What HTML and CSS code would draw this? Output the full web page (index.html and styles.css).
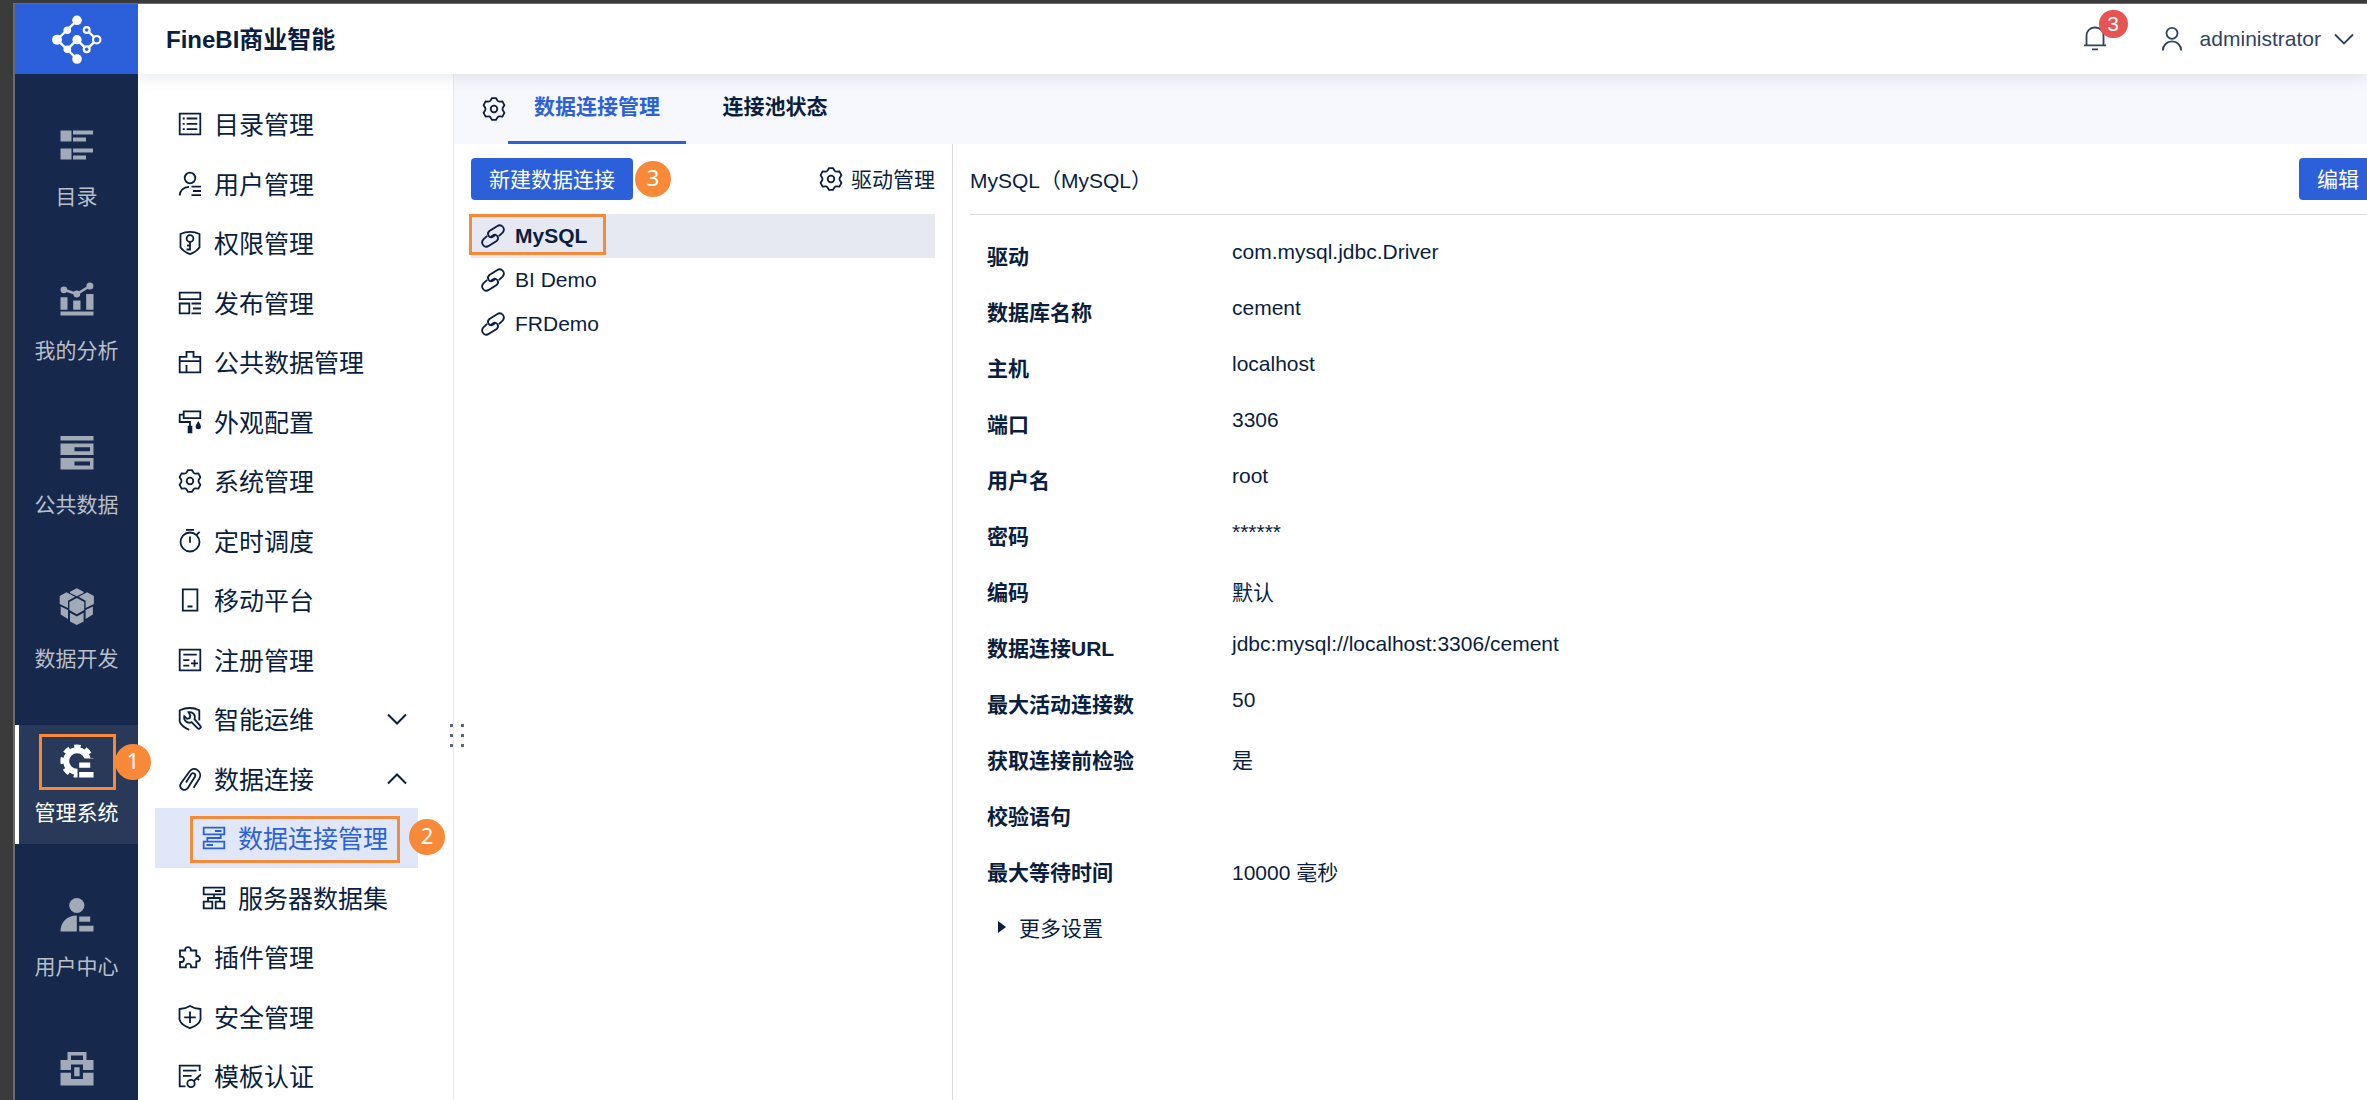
FILE: index.html
```html
<!DOCTYPE html>
<html lang="zh-CN">
<head>
<meta charset="utf-8">
<title>FineBI商业智能</title>
<link rel="stylesheet" href="styles.css">
</head>
<body>
<svg class="sprite" aria-hidden="true">
  <symbol id="gear" viewBox="0 0 24 24" overflow="visible"><path d="M10 1.2h4l1.6 2.6q.7.9 1.9.8l2.9-.2 2 3.8-1.6 2.5q-.6 1.3 0 2.6l1.6 2.5-2 3.8-2.9-.2q-1.2-.1-1.9.8L14 22.8h-4l-1.6-2.6q-.7-.9-1.9-.8l-2.9.2-2-3.8 1.6-2.5q.6-1.3 0-2.6L1.6 8.2l2-3.8 2.9.2q1.2.1 1.9-.8Z"/><circle cx="12" cy="12" r="3.3"/></symbol>
  <symbol id="link" viewBox="0 0 24 24" overflow="visible"><path d="M17.8 12.2 21.6 8.6C25 4.5 20.5-.8 16 2.2L8.4 7C5 10 8.500 15 11.800 12.800L14.500 11"/><path d="M6.2 11.8 2.4 15.4C-1 19.5 3.5 24.8 8 21.8L15.6 17C19 14 15.5 9 12.2 11.2L9.500 13"/></symbol>
  <symbol id="chevron-down" viewBox="0 0 24 24"><path d="m3 7.500 9 9 9-9"/></symbol>
  <symbol id="chevron-up" viewBox="0 0 24 24"><path d="m3 16.500 9-9 9 9"/></symbol>
</svg>
<div class="app">
  <aside class="sidebar">
    <a class="logo" href="#" aria-label="FineBI">
      <svg viewBox="0 0 52 52" aria-hidden="true">
        <path d="M26 7.300 6 26.700 26 46M16.300 36.300 26 26.700l9.700 9.600M35.700 17l10 9.700-10 9.600" fill="none" stroke="#fff" stroke-width="2.400"/>
        <g fill="#fff"><circle cx="26" cy="7.300" r="4.800"/><circle cx="16.300" cy="17.300" r="3.800"/><circle cx="6" cy="26.700" r="5"/><circle cx="26" cy="26.700" r="4.600"/><circle cx="16.300" cy="36.300" r="3.800"/><circle cx="26" cy="46" r="4.800"/></g>
        <g fill="#2c60db" stroke="#fff" stroke-width="2.200"><circle cx="35.700" cy="17" r="2.900"/><circle cx="45.700" cy="26.700" r="3.700"/><circle cx="35.700" cy="36.300" r="2.900"/></g>
      </svg>
    </a>
    <nav class="rail">
      <a class="rail-item" href="#"><svg viewBox="0 0 34 34" aria-hidden="true"><path d="M.5 2.500h11v11H.5zM13 2.500h20v4H13zM13 9.500h13v4H13zM.5 20.500h11v11H.5zM13 20.500h20v4H13zM13 27.500h13v4H13z"/></svg><span>目录</span></a>
      <a class="rail-item" href="#"><svg viewBox="0 0 34 34" aria-hidden="true"><path d="M.5 15.200h7v12.500h-7zM13.200 18.500h7.300v9.200h-7.300zM26.200 12h7.300v15.700h-7.300zM.5 29.500h33v4H.5z"/><circle cx="3.900" cy="7.800" r="3.400"/><circle cx="16.800" cy="12" r="3.400"/><circle cx="29.900" cy="4" r="3.500"/><path d="m3.900 7.800 12.900 4.200L29.900 4" fill="none" stroke="currentColor" stroke-width="2.600"/></svg><span>我的分析</span></a>
      <a class="rail-item" href="#"><svg viewBox="0 0 34 34" aria-hidden="true"><path fill-rule="evenodd" d="M.5 0h33v4.500H.5zM.5 7.500h33v11.500H.5zM14.500 11.200v4H30v-4zM.5 22h33v11.500H.5zM14.500 25.500v4H30v-4z"/></svg><span>公共数据</span></a>
      <a class="rail-item" href="#"><svg viewBox="0 0 34 34" aria-hidden="true"><path d="m16.800 8 7.400 4v8l-7.400 4.200L9.400 20v-8zM16.800-1.700l6.700 3.400V3l-6.700 3.300L10 3V1.700zM-.3 6l6.800-3.700L15 6.700l-7 4V18l-8.300-4zM33.900 6l-6.800-3.700-8.500 4.400 7 4V18l8.300-4zM.7 16.500 8 20v9L.7 24.500zM32.900 16.500 25.600 20v9l7.300-4.500zM10 22.700l6.800 3.800 6.800-3.800v8.800L16.800 35 10 31.500z"/></svg><span>数据开发</span></a>
      <a class="rail-item is-active" href="#"><svg viewBox="0 0 34 34" aria-hidden="true"><clipPath id="gear-cut"><path d="M-1-1h36v15.500H17.500V35H-1z"/></clipPath><g clip-path="url(#gear-cut)" fill="none" stroke="currentColor"><circle cx="17" cy="17" r="10.800" stroke-width="6"/><circle cx="17" cy="17" r="14.800" stroke-width="3.600" stroke-dasharray="6.500 5.124" stroke-dashoffset="3.250"/></g><path d="M19.200 18.500h11v5.300h-11zM19.200 28h14.300v5.500H19.200z"/></svg><span>管理系统</span><i class="mark mark-rail"></i><b class="step step-rail">1</b></a>
      <a class="rail-item" href="#"><svg viewBox="0 0 34 34" aria-hidden="true"><circle cx="16.800" cy="7.500" r="7.600"/><path d="M.5 33.500c0-9.500 6.500-16 16.300-16v16zM19.200 18.500h11v5.300h-11zM19.200 27.700h14.300v5.800H19.200z"/></svg><span>用户中心</span></a>
      <a class="rail-item" href="#" aria-label="工具箱"><svg viewBox="0 0 34 34" aria-hidden="true"><path fill-rule="evenodd" d="M7.500 8V0h19v8h7v10H23v-5.500H11V18H.5V8zM11 8h12V3.500H11zM.5 20.800H11V27h12v-6.200h10.500v12.700H.5zM14.200 15.200h5.400v9h-5.400z"/></svg></a>
    </nav>
  </aside>

  <div class="main">
    <header class="topbar">
      <h1 class="brand">FineBI商业智能</h1>
      <button class="bell" type="button" aria-label="消息"><svg class="icon" viewBox="0 0 24 24" aria-hidden="true"><path d="M3.500 18V8.500a8 8 0 0 1 8-8h1a8 8 0 0 1 8 8V18M1 18.300h22M9 22.300h6"/></svg><span class="count">3</span></button>
      <button class="account" type="button"><svg class="icon" viewBox="0 0 24 24" aria-hidden="true"><circle cx="12" cy="6.300" r="5.500"/><path d="M2.800 23.500a9.200 9.200 0 0 1 18.400 0"/></svg><span>administrator</span><svg class="icon" aria-hidden="true"><use href="#chevron-down"/></svg></button>
    </header>

    <div class="workspace">
      <nav class="menu">
        <ul class="menu-list">
          <li><a class="menu-link" href="#"><svg class="icon" viewBox="0 0 24 24" aria-hidden="true"><path d="M1.700 1.700h20.600v20.600H1.700zM4.700 6.500h2M4.700 11.800h2M4.700 17.100h2M8.700 6.500h10.600M8.700 11.800h10.600M8.700 17.100h10.600"/></svg><span>目录管理</span></a></li>
          <li><a class="menu-link" href="#"><svg class="icon" viewBox="0 0 24 24" aria-hidden="true"><circle cx="12" cy="6" r="5.300"/><path d="M1.700 23.500C1.700 18.500 5.500 15 11 14.800M13.500 14.700H23M15 19h8M13.500 23.200H23"/></svg><span>用户管理</span></a></li>
          <li><a class="menu-link" href="#"><svg class="icon" viewBox="0 0 24 24" aria-hidden="true"><path d="M12 .8Q17 .8 21.500 3v13.500Q18 21 12 23.200 6 21 2.500 16.500V3Q7 .8 12 .8Z"/><circle cx="12" cy="7.500" r="3.400"/><path d="M12 11v8.500M12 14.500H9M12 18.500H8.500"/></svg><span>权限管理</span></a></li>
          <li><a class="menu-link" href="#"><svg class="icon" viewBox="0 0 24 24" aria-hidden="true"><path d="M1.700 1.700h20.600v6.500H1.700zM1.700 12.500h9.600v9.800H1.700zM13.500 12.500H23M15 17.500h8M13.500 22.300H23"/></svg><span>发布管理</span></a></li>
          <li><a class="menu-link" href="#"><svg class="icon" viewBox="0 0 24 24" aria-hidden="true"><path d="M1.700 6.800h6.800v-5h7v5h6.800v15.500H1.700zM1.700 11.200h20.600M8.500 15v7"/></svg><span>公共数据管理</span></a></li>
          <li><a class="menu-link" href="#"><svg class="icon" viewBox="0 0 24 24" aria-hidden="true"><path d="M5.700 1.300h16.600v6.900H5.700zM5.700 4.700h-4V12H12v4"/><path class="solid" d="M9.700 15.700h4.600v7.600H9.700zM20.300 11q5.400 8 0 8.300-5.400-.3 0-8.300z"/></svg><span>外观配置</span></a></li>
          <li><a class="menu-link" href="#"><svg class="icon" aria-hidden="true"><use href="#gear"/></svg><span>系统管理</span></a></li>
          <li><a class="menu-link" href="#"><svg class="icon" viewBox="0 0 24 24" aria-hidden="true"><circle cx="12" cy="13" r="9.500"/><path d="M8 .9h8M12 7.500v6.300M18.200 6.200l3.500-3.400"/></svg><span>定时调度</span></a></li>
          <li><a class="menu-link" href="#"><svg class="icon" viewBox="0 0 24 24" aria-hidden="true"><path d="M4.800 1.400h14.600v21.200H4.800zM9.500 18.500h5"/></svg><span>移动平台</span></a></li>
          <li><a class="menu-link" href="#"><svg class="icon" viewBox="0 0 24 24" aria-hidden="true"><path d="M1.700 1.700h20.600v20.600H1.700zM5.300 6.700h13.500M5.300 12.200h6M5.300 17.700h6M13 15.300h7M16.500 11.800v7"/></svg><span>注册管理</span></a></li>
          <li><a class="menu-link" href="#"><svg class="icon" viewBox="0 0 24 24" aria-hidden="true"><path d="M21.300 13.500V3.300Q12-1.300 1.700 3.300V14.500q1.500 5 9.500 8.300"/><path d="M10.500 5.200a5.200 5.200 0 0 1 6 7l5.600 6.400a1.800 1.800 0 0 1-2.600 2.600l-6-6a5.200 5.200 0 0 1-7.200-6l2.700 2.600 2.600-.6.7-2.700z"/></svg><span>智能运维</span><svg class="icon arrow" aria-hidden="true"><use href="#chevron-down"/></svg></a></li>
          <li>
            <a class="menu-link" href="#"><svg class="icon" viewBox="0 0 24 24" aria-hidden="true"><path d="m15.600 20.800 5.800-9.300C25 5 16-2 11.500 4.500L3 16.200c-3 5 4 9.300 7 4.600l6.900-11c1.500-3-2.200-5-3.900-2.400L8 15.400"/></svg><span>数据连接</span><svg class="icon arrow" aria-hidden="true"><use href="#chevron-up"/></svg></a>
            <ul class="menu-sub">
              <li><a class="menu-link is-active" href="#"><svg class="icon" viewBox="0 0 24 24" aria-hidden="true"><path d="M1.700 1.700h20.600v6.600H1.700zM13 5h6.500M18.700 8.300V12H5.300v3.700M1.700 15.700h20.600v6.600H1.700zM4.500 19H11"/></svg><span>数据连接管理</span><i class="mark mark-menu"></i><b class="step step-menu">2</b></a></li>
              <li><a class="menu-link" href="#"><svg class="icon" viewBox="0 0 24 24" aria-hidden="true"><path d="M1.700 1.700h20.600v6.600H1.700zM13 5h6.500M12 8.300V12M6 15.700V12h12v3.700M1.700 15.700h8.600v6.600H1.700zM13.700 15.700h8.600v6.600h-8.600z"/></svg><span>服务器数据集</span></a></li>
            </ul>
          </li>
          <li><a class="menu-link" href="#"><svg class="icon" viewBox="0 0 24 24" aria-hidden="true"><path d="M2 5.500h5.200V4.200a2.900 2.900 0 0 1 5.600 0v1.300h5.500V11h1a2.700 2.700 0 0 1 0 5.400h-1v5.900H13v-1.700a2.700 2.700 0 0 0-5.200 0v1.700H2V17h1.300a2.700 2.700 0 0 0 0-5.400H2Z"/></svg><span>插件管理</span></a></li>
          <li><a class="menu-link" href="#"><svg class="icon" viewBox="0 0 24 24" aria-hidden="true"><path d="M12 .9Q16 3.400 22.500 4v10.500Q21 20 12 23.200 3 20 1.500 14.500V4Q8 3.400 12 .9ZM12 6.500V18M6.200 12.300h11.600"/></svg><span>安全管理</span></a></li>
          <li><a class="menu-link" href="#"><svg class="icon" viewBox="0 0 24 24" aria-hidden="true"><path d="M7.500 22.300H1.700V1.700h20V7M5 6.700h13.500M5 11.800h8.500M15.800 17 23 10.500M19 14.200l2 2"/><circle cx="13" cy="19.500" r="3.700"/></svg><span>模板认证</span></a></li>
        </ul>
        <div class="grip"><i></i><i></i><i></i><i></i><i></i><i></i></div>
      </nav>

      <main class="content">
        <div class="tabs">
          <svg class="icon" aria-hidden="true"><use href="#gear"/></svg>
          <a class="tab is-active" href="#">数据连接管理</a>
          <a class="tab" href="#">连接池状态</a>
        </div>
        <div class="panes">
          <section class="connections">
            <div class="toolbar">
              <button class="primary" type="button">新建数据连接</button>
              <b class="step">3</b>
              <button class="drivers" type="button"><svg class="icon" aria-hidden="true"><use href="#gear"/></svg><span>驱动管理</span></button>
            </div>
            <ul class="connection-list">
              <li><a class="connection is-active" href="#"><svg class="icon" aria-hidden="true"><use href="#link"/></svg><span>MySQL</span><i class="mark mark-list"></i></a></li>
              <li><a class="connection" href="#"><svg class="icon" aria-hidden="true"><use href="#link"/></svg><span>BI Demo</span></a></li>
              <li><a class="connection" href="#"><svg class="icon" aria-hidden="true"><use href="#link"/></svg><span>FRDemo</span></a></li>
            </ul>
          </section>
          <section class="detail">
            <div class="detail-head">
              <h2>MySQL（MySQL）</h2>
              <button class="primary edit" type="button">编辑</button>
            </div>
            <dl class="props">
              <dt>驱动</dt><dd>com.mysql.jdbc.Driver</dd>
              <dt>数据库名称</dt><dd>cement</dd>
              <dt>主机</dt><dd>localhost</dd>
              <dt>端口</dt><dd>3306</dd>
              <dt>用户名</dt><dd>root</dd>
              <dt>密码</dt><dd>******</dd>
              <dt>编码</dt><dd>默认</dd>
              <dt>数据连接URL</dt><dd>jdbc:mysql://localhost:3306/cement</dd>
              <dt>最大活动连接数</dt><dd>50</dd>
              <dt>获取连接前检验</dt><dd>是</dd>
              <dt>校验语句</dt><dd></dd>
              <dt>最大等待时间</dt><dd>10000 毫秒</dd>
            </dl>
            <button class="more" type="button"><i class="triangle"></i>更多设置</button>
          </section>
        </div>
      </main>
    </div>
  </div>
</div>
</body>
</html>
```
FILE: styles.css
```css
:root {
  --ink: #091e40;
  --blue: #2c60db;
  --navy: #16284c;
  --orange: #f88938;
  --line: #d9dbe0;
}

* { box-sizing: border-box; }

body {
  margin: 0;
  padding: 3px 0 0 13px;
  height: 100vh;
  overflow: hidden;
  background: #3b3b3b;
  color: var(--ink);
  font: 21px "Liberation Sans", "Noto Sans CJK SC", sans-serif;
}

a { color: inherit; text-decoration: none; }
ul, dl, dd, h1, h2 { margin: 0; padding: 0; }
ul { list-style: none; }
button {
  padding: 0;
  border: 0;
  background: none;
  color: inherit;
  font: inherit;
}

.sprite { display: none; }

.icon {
  flex: none;
  width: 24px;
  height: 24px;
  overflow: visible;
  fill: none;
  stroke: currentColor;
  stroke-width: 1.8;
}
.icon .solid { fill: currentColor; stroke: none; }

.app {
  display: flex;
  height: 100%;
  overflow: hidden;
  border-top: 1px solid #6e6a67;
  border-left: 2px solid #6e6a67;
  background: #fff;
}

/* Annotation frames and numbered steps */
.mark {
  position: absolute;
  border: 3px solid var(--orange);
}
.mark-rail { left: 24px; top: 9px; width: 77px; height: 56px; }
.mark-menu { left: 35px; top: 8px; width: 210px; height: 47px; }
.mark-list { left: -2px; top: 0; width: 137px; height: 41px; }
.step {
  width: 36px;
  height: 36px;
  border-radius: 50%;
  background: var(--orange);
  color: #fff;
  font: 22px/32px "Noto Sans", sans-serif;
  text-align: center;
}
.step-rail { position: absolute; left: 100px; top: 19px; }
.step-menu { position: absolute; left: 254px; top: 11px; }

/* Left rail */
.sidebar {
  position: relative;
  z-index: 3;
  flex: none;
  width: 123px;
  background: var(--navy);
}
.logo {
  display: flex;
  align-items: center;
  justify-content: center;
  height: 70px;
  background: var(--blue);
}
.logo svg { width: 52px; height: 52px; }
.rail {
  display: flex;
  flex-direction: column;
  gap: 35px;
  padding-top: 35px;
}
.rail-item {
  position: relative;
  display: flex;
  flex-direction: column;
  align-items: center;
  gap: 21px;
  height: 119px;
  padding-top: 19px;
  color: #b9bfc9;
  line-height: 28px;
}
.rail-item svg {
  width: 34px;
  height: 34px;
  overflow: visible;
  color: #a2a9b7;
  fill: currentColor;
}
.rail-item.is-active {
  background: #293959;
  box-shadow: inset 4px 0 #fff;
  color: #fff;
}
.rail-item.is-active svg { color: #fff; }

/* Top bar */
.main {
  display: flex;
  flex: 1;
  flex-direction: column;
  min-width: 0;
}
.topbar {
  position: relative;
  z-index: 2;
  display: flex;
  flex: none;
  align-items: center;
  height: 70px;
  padding: 0 11px 0 28px;
  background: #fff;
  box-shadow: 0 2px 16px rgba(9, 30, 64, .12);
}
.brand {
  flex: 1;
  padding-top: 2px;
  font-size: 24px;
  line-height: 36px;
}
.bell {
  position: relative;
  display: flex;
  margin-right: 53px;
  color: #2f4362;
}
.count {
  position: absolute;
  left: 16px;
  top: -17px;
  width: 29px;
  height: 28px;
  border-radius: 14px;
  background: #e85353;
  color: #fff;
  line-height: 28px;
  text-align: center;
}
.account {
  display: flex;
  align-items: center;
  color: #2f4362;
}
.account span { margin: 0 11px 0 16px; }

/* Menu */
.workspace {
  display: flex;
  flex: 1;
  min-height: 0;
}
.menu {
  position: relative;
  flex: none;
  width: 316px;
  border-right: 1px solid #e8eaee;
}
.menu-list { padding: 20px 35px 0 17px; }
.menu-link {
  position: relative;
  display: flex;
  align-items: center;
  gap: 12px;
  height: 60px;
  padding: 0 9px 0 23px;
  font-size: 25px;
  white-space: nowrap;
}
.menu-link span { padding-bottom: 2px; }
.menu li:nth-child(even) > .menu-link { height: 59px; }
.menu-sub .menu-link { padding-left: 47px; }
.menu-link.is-active {
  background: #dfe7f9;
  color: var(--blue);
}
.arrow { margin-left: auto; stroke-width: 2; }
.grip {
  position: absolute;
  right: -11px;
  top: 650px;
  display: grid;
  grid-template-columns: 3px 3px;
  gap: 7px 8px;
}
.grip i { height: 3px; background: #59667e; }

/* Content */
.content {
  display: flex;
  flex: 1;
  flex-direction: column;
  min-width: 0;
}
.tabs {
  display: flex;
  flex: none;
  align-items: center;
  height: 70px;
  padding-left: 28px;
  background: #f7f8fd;
}
.tabs .icon { margin-right: 2px; }
.tab {
  width: 178px;
  height: 70px;
  border-bottom: 3px solid transparent;
  font-weight: bold;
  line-height: 66px;
  text-align: center;
}
.tab.is-active { border-color: var(--blue); color: var(--blue); }
.panes {
  display: flex;
  flex: 1;
  min-height: 0;
}

.connections {
  flex: none;
  width: 499px;
  padding: 14px 17px 0;
  border-right: 1px solid var(--line);
}
.toolbar {
  display: flex;
  align-items: center;
  gap: 2px;
  margin-bottom: 14px;
}
.primary {
  height: 42px;
  padding: 0 18px 2px;
  border-radius: 4px;
  background: var(--blue);
  color: #fff;
}
.drivers {
  display: flex;
  align-items: center;
  gap: 8px;
  margin-left: auto;
}
.drivers span { padding-bottom: 2px; }
.connection {
  position: relative;
  display: flex;
  align-items: center;
  gap: 10px;
  height: 44px;
  padding-left: 10px;
}
.connection.is-active { background: #e6e9f1; font-weight: bold; }

.detail {
  flex: 1;
  min-width: 0;
  padding-left: 17px;
}
.detail-head {
  display: flex;
  align-items: center;
  justify-content: space-between;
  height: 71px;
  border-bottom: 1px solid var(--line);
}
.detail-head h2 { font-size: 21px; font-weight: normal; }
.edit { padding: 0 8px 2px 18px; border-radius: 4px 0 0 4px; }
.props {
  display: grid;
  grid-template-columns: 245px 1fr;
  grid-auto-rows: 56px;
  margin: 25px 0 0 17px;
}
.props dt { font-weight: bold; line-height: 34px; }
.more {
  display: flex;
  align-items: center;
  gap: 13px;
  margin-left: 28px;
}
.triangle {
  border: 6px solid transparent;
  border-right: 0;
  border-left: 8px solid var(--ink);
}
```
